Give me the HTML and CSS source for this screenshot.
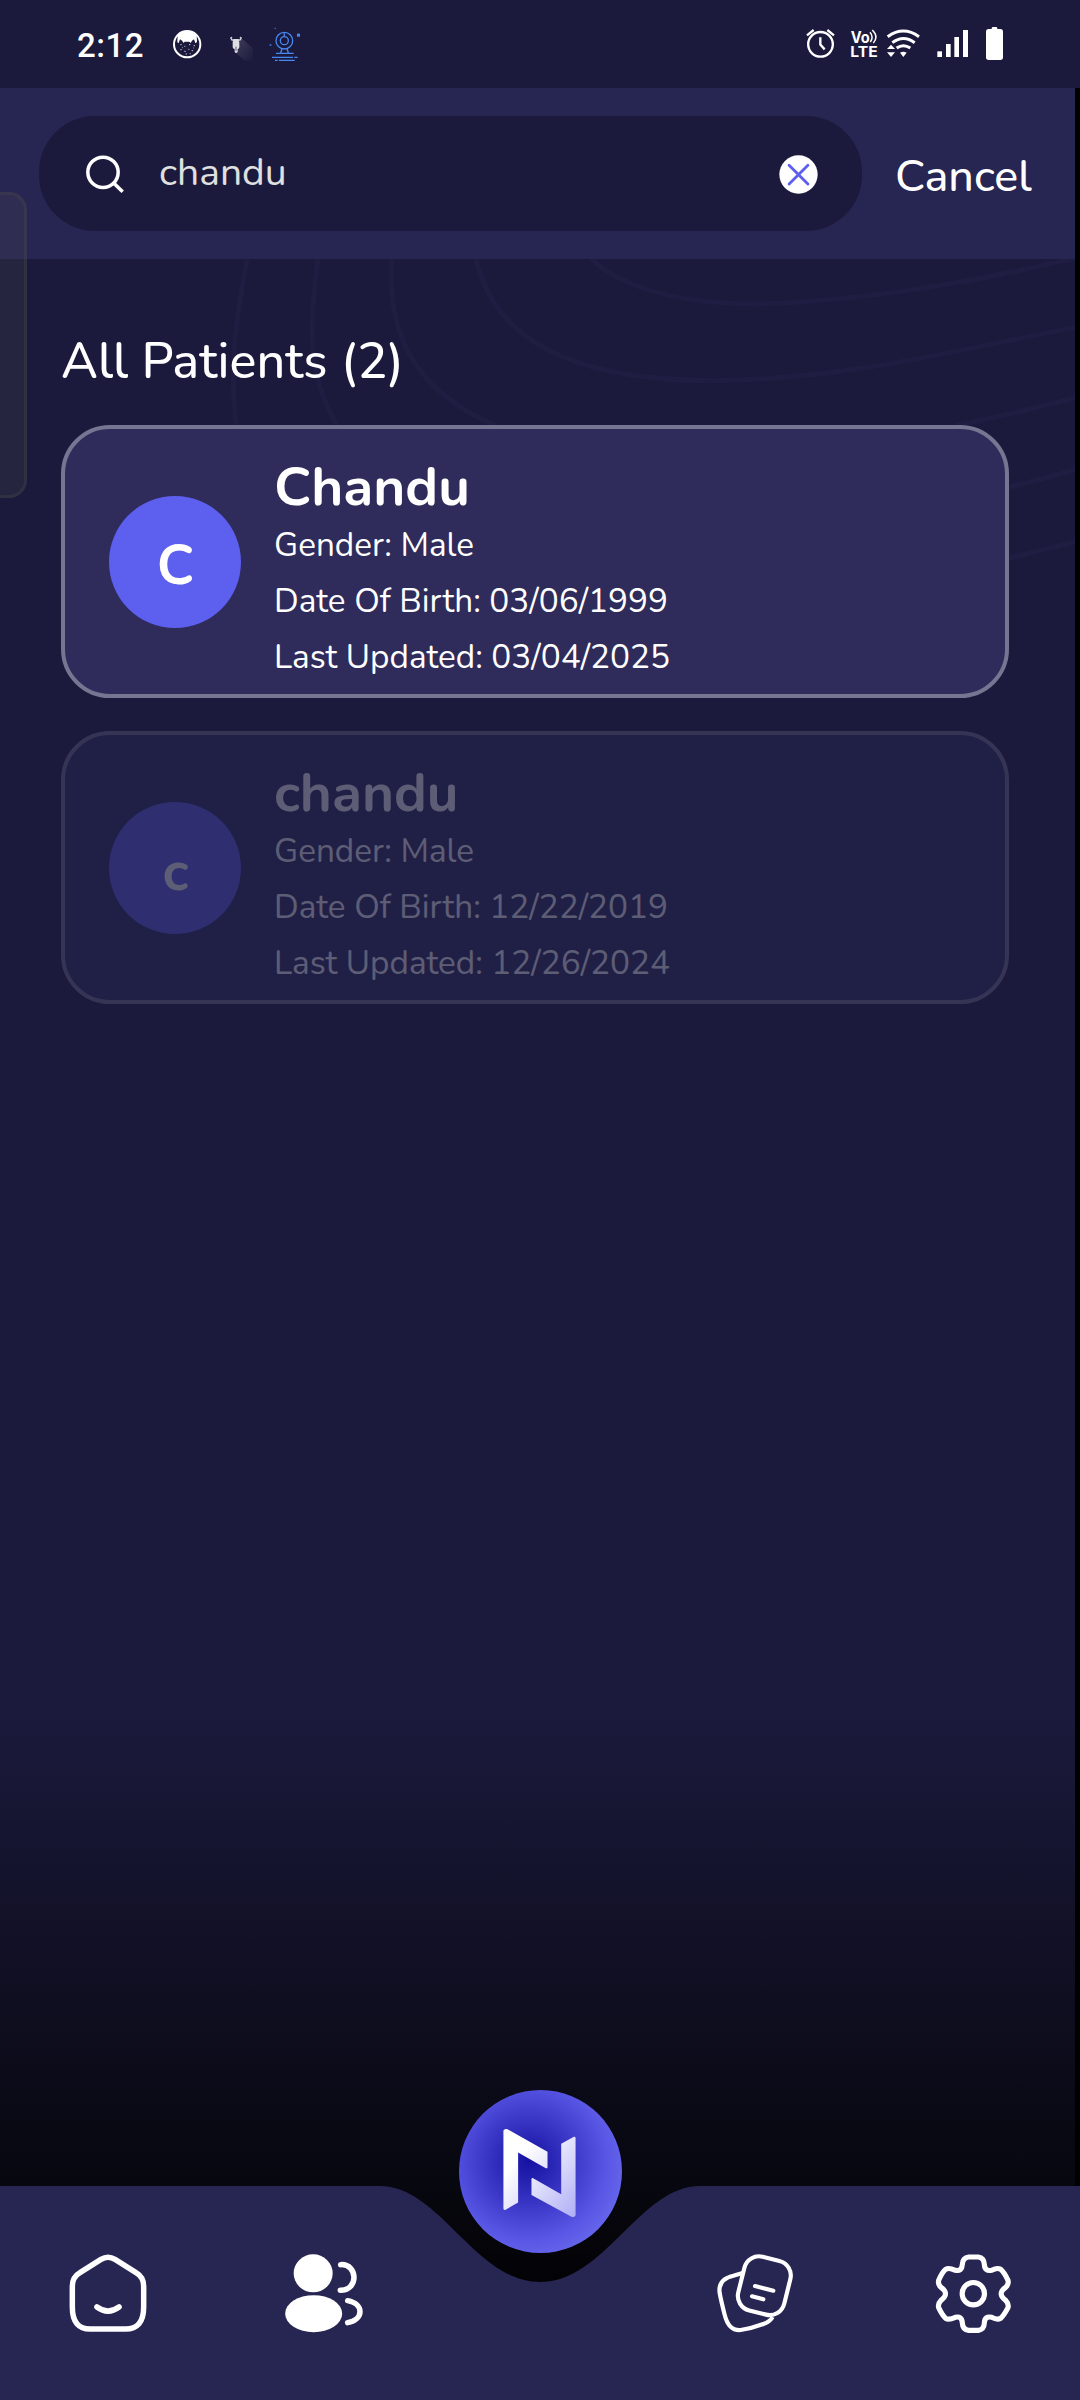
FILE: index.html
```html
<!DOCTYPE html>
<html lang="en">
<head>
<meta charset="utf-8">
<title>Patients</title>
<link rel="stylesheet" href="styles.css">
</head>
<body>
<div class="screen">
  <header class="status">
    <div class="status-left">
      <span class="time">2:12</span>
      <svg class="ic-cat" viewBox="24 21 87 102">
        <circle cx="66.500" cy="72.500" r="39.500" fill="none" stroke="#fff" stroke-width="6"/>
        <path d="M38 46Q66 22 95 46L96 64Q95 70 91 69L87 58Q80 61 77 69L73 65H59L56 69Q52 61 45 58L41 69Q37 70 37 64Z" fill="#fff"/>
        <path d="M46 74h4M58 79h3M72 74h4M86 77h4M46 89h4M58 94h4M70 88h3M80 92h4M62 102h4M74 101h3M52 83h2M84 84h2" stroke="#c8c8d4" stroke-width="3"/>
      </svg>
      <svg class="ic-scooter" viewBox="195 21 69 102">
        <defs><linearGradient id="shade" x1="0" y1="0" x2="1" y2="1"><stop offset="0" stop-color="#55536a"/><stop offset="1" stop-color="#1f1c3f"/></linearGradient></defs>
        <path d="M229 54L263 84V122H240L212 98Z" fill="url(#shade)" opacity=".6"/>
        <path d="M197 54L201 60H225L229 54" fill="none" stroke="#d6d6de" stroke-width="4"/>
        <circle cx="199" cy="53" r="3" fill="#ccc"/><circle cx="227" cy="53" r="3" fill="#ccc"/>
        <path d="M206 57H220L223 66V82Q222 87 218 88V96Q213 102 209 96V88Q204 87 203 82V66Z" fill="#dddde4"/>
        <path d="M213 80V92" stroke="#77758c" stroke-width="4"/>
      </svg>
      <svg class="ic-cam" viewBox="312 21 99 102" fill="none" stroke="#4788f0" stroke-width="4">
        <circle cx="358" cy="62" r="25"/><circle cx="358" cy="62" r="12"/>
        <path d="M358 40V48M351 86L347 98M366 86L370 98M333 100H386M321 112H384M388 112H398M330 121H338M342 121H389"/>
        <rect x="398" y="43" width="5" height="5" fill="#4788f0"/>
        <path d="M314 75H319M329 25H332"/>
      </svg>
    </div>
    <div class="status-right">
      <svg class="ic-alarm" viewBox="18 21 87 102" fill="none" stroke="#fff" stroke-width="7">
        <circle cx="61.500" cy="73" r="37"/><path d="M61 52V74L74 88M21 46L41 30M102 46L82 30"/>
      </svg>
      <svg class="ic-volte" viewBox="150 21 84 102">
        <text class="lte" x="152" y="68" textLength="57" lengthAdjust="spacingAndGlyphs">Vo</text>
        <text class="lte lower" x="151" y="112" textLength="82" lengthAdjust="spacingAndGlyphs">LTE</text>
        <path d="M210 37Q222 51 211 66M217 30Q237 50 220 69" fill="none" stroke="#fff" stroke-width="4.500"/>
      </svg>
      <svg class="ic-wifi" viewBox="258 21 105 102" fill="none" stroke="#fff" stroke-width="9">
        <path d="M263 50Q310 16 357 50M277 68Q310 43 344 68M290 84Q310 70 331 84"/>
        <path d="M300 98Q310 92 320 98L310 111ZM261 87L273 74L285 87ZM261 97H285L273 111Z" fill="#fff" stroke="none"/>
      </svg>
      <svg class="ic-signal" viewBox="408 21 99 102" fill="#fff">
        <rect x="412" y="94" width="14" height="17"/><rect x="438" y="72" width="14" height="39"/><rect x="463" y="51" width="14" height="60"/><rect x="489" y="30" width="15" height="81"/>
      </svg>
      <svg class="ic-battery" viewBox="555 21 57 102" fill="#fff">
        <rect x="558" y="27" width="51" height="93" rx="8"/><rect x="575" y="21" width="17" height="10" rx="4"/>
      </svg>
    </div>
  </header>

  <div class="content">
    <svg class="contours" viewBox="0 259 1075 360" fill="none">
      <path d="M247 259C240 300 227 360 237 430M318 259C308 330 308 380 340 430M391.500 259C389 320 400 385 500 428M476 259C495 340 570 380 712 380.700C850 380 980 345 1075 327.500M591 259C625 290 680 303 752 304C860 302 980 281 1075 258M955 426Q1020 412 1075 398M1000 489Q1040 480 1075 470M1000 560Q1040 551 1075 542"/>
    </svg>
    <div class="search-bar">
      <div class="search-field">
        <svg class="ic-search" viewBox="255 459 120 120" fill="none" stroke="#fff" stroke-width="10.500"><circle cx="309" cy="514" r="45.500"/><path d="M341 546L368 572"/></svg>
        <span class="query">chandu</span>
        <svg class="ic-clear" viewBox="118 464 117 118"><circle cx="176.500" cy="523" r="58" fill="#fff"/><path d="M148 495L205 552M205 495L148 552" fill="none" stroke="#5d5fef" stroke-width="8.500" stroke-linecap="round"/></svg>
      </div>
      <span class="cancel">Cancel</span>
    </div>
    <main class="patients">
      <h1 class="heading">All Patients (2)</h1>
      <article class="card">
        <div class="avatar">C</div>
        <div class="info">
          <h2 class="name">Chandu</h2>
          <p class="line">Gender: Male</p>
          <p class="line">Date Of Birth: 03/06/1999</p>
          <p class="line">Last Updated: 03/04/2025</p>
        </div>
      </article>
      <article class="card inactive">
        <div class="avatar">c</div>
        <div class="info">
          <h2 class="name">chandu</h2>
          <p class="line">Gender: Male</p>
          <p class="line">Date Of Birth: 12/22/2019</p>
          <p class="line">Last Updated: 12/26/2024</p>
        </div>
      </article>
    </main>
  </div>

  <nav class="nav">
    <svg class="nav-notch" viewBox="0 0 320 96"><defs><linearGradient id="dip" x1="0" y1="0" x2="0" y2="1"><stop offset="0" stop-color="#07070f"/><stop offset="1" stop-color="#030306"/></linearGradient></defs><path d="M0 0C60 0 95 96 160 96C225 96 260 0 320 0Z" fill="url(#dip)"/></svg>
    <svg class="fab" viewBox="296 91 488 488">
      <defs>
        <radialGradient id="orb" gradientUnits="userSpaceOnUse" cx="504" cy="305" r="335"><stop offset="0" stop-color="#1712a3"/><stop offset=".12" stop-color="#201cac"/><stop offset=".7" stop-color="#5856e4"/><stop offset="1" stop-color="#7070f2"/></radialGradient>
        <linearGradient id="fold" gradientUnits="userSpaceOnUse" x1="450" y1="260" x2="660" y2="440"><stop offset="0" stop-color="#fff"/><stop offset=".15" stop-color="#fff"/><stop offset="1" stop-color="#b2b1f6"/></linearGradient>
      </defs>
      <circle cx="540" cy="335" r="244" fill="url(#orb)"/>
      <path d="M429 212Q432 206 440 208L561 276V322Q561 327 556 325L473 278V428L434 450Q429 451 429 446ZM513 358Q513 353 518 355L602 403V252L640 231Q645 230 645 235V466Q643 473 634 471L513 405Z" fill="url(#fold)"/>
    </svg>
    <div class="tab"><svg class="tab-icon" viewBox="207 281 234 234" fill="none" stroke="#fff" stroke-width="16.500" stroke-linecap="round">
      <path d="M303 297Q324 284 345 297L408 337Q431 350 431 378V440Q431 507 375 506H272Q217 507 217 440V378Q217 350 240 337Z"/><path d="M291 440Q324 465 357 440" stroke-width="17"/></svg></div>
    <div class="tab"><svg class="tab-icon" viewBox="855 281 234 234" fill="none" stroke="#fff" stroke-width="16.500" stroke-linecap="round">
      <ellipse cx="939.500" cy="339" rx="58.500" ry="57" fill="#fff" stroke="none"/><ellipse cx="941" cy="460" rx="85.500" ry="55.500" fill="#fff" stroke="none"/>
      <path d="M1022 313C1048 311 1062 332 1062 351C1062 371 1048 390 1021 390M1043 421C1068 426 1080 440 1080 454C1080 468 1068 482 1043 487"/></svg></div>
    <div class="tab"></div>
    <div class="tab"><svg class="tab-icon" viewBox="111 281 234 234" fill="none" stroke="#fff" stroke-width="12.500" stroke-linecap="round">
      <rect x="182" y="293" width="142" height="166" rx="45" transform="rotate(14 253 376)"/>
      <path d="M188 338L160 346Q113 357 119 398Q124 425 134 463Q146 512 182 509Q215 504 250 491Q270 484 278 470" stroke-linecap="butt"/><path d="M225 377L280 391M216 408L250 417"/></svg></div>
    <div class="tab"><svg class="tab-icon" viewBox="759 281 234 234" fill="none" stroke="#fff" stroke-width="15.500">
      <circle cx="880" cy="400" r="33.500"/>
      <path d="M866 290H895Q912 292 913 312Q914 334 935 330Q952 321 962 327Q972 335 984 360Q987 372 977 381Q950 400 977 420Q987 430 984 442Q972 465 962 474Q952 480 935 471Q914 466 913 488Q912 508 895 510H866Q848 508 847 488Q846 466 826 471Q806 480 797 474Q787 465 776 442Q773 430 783 420Q810 400 783 381Q773 372 776 360Q787 335 797 327Q806 321 826 330Q846 334 847 312Q848 292 866 290Z"/></svg></div>
  </nav>
  <div class="edge-handle"></div>
</div>
</body>
</html>
```
FILE: styles.css
```css
* {
  box-sizing: border-box;
}

body {
  margin: 0;
  background: #000;
  color: #fff;
  font-family: Nunito, "Open Sans", sans-serif;
}

h1, h2, p {
  margin: 0;
}

svg {
  display: block;
  flex: none;
}

.screen {
  position: relative;
  display: flex;
  flex-direction: column;
  width: 1080px;
  height: 2400px;
  overflow: hidden;
}

/* Status bar */
.status {
  display: flex;
  justify-content: space-between;
  height: 88px;
  padding: 0 76px 0 77px;
  background: #1b1a3d;
}

.status-left,
.status-right {
  display: flex;
  align-items: center;
}

.status svg {
  height: 34px;
}

.time {
  width: 96px;
  padding-top: 3px;
  font: 500 33px/40px Roboto, sans-serif;
  letter-spacing: 0.5px;
}

.ic-cat { width: 29px; margin-right: 28px; }
.ic-scooter { width: 23px; margin-right: 16px; }
.ic-cam { width: 33px; }
.ic-alarm { width: 29px; margin-right: 15px; }
.ic-volte { width: 28px; margin-right: 8px; }
.ic-wifi { width: 35px; margin-right: 15px; }
.ic-signal { width: 33px; margin-right: 16px; }
.ic-battery { width: 19px; }

.lte {
  font: 700 46px Inter, sans-serif;
  fill: #fff;
}

.lte.lower {
  font-size: 42px;
}

.content {
  position: relative;
  flex: 1;
  width: 1075px;
  background: linear-gradient(#1b1a3d 0, #1b1a3d 1615px, #07070f 2098px);
}

.contours {
  position: absolute;
  left: 0;
  top: 171px;
  width: 1075px;
  height: 360px;
  stroke: #201d43;
  stroke-width: 5;
}

.search-bar {
  position: relative;
  display: flex;
  align-items: center;
  gap: 33px;
  height: 171px;
  padding-left: 39px;
  background: #272552;
}

.search-field {
  display: flex;
  align-items: center;
  width: 823px;
  height: 115px;
  padding: 0 44px 0 46px;
  border-radius: 56px;
  background: #1b1a3d;
}

.ic-search {
  width: 40px;
  height: 40px;
}

.query {
  flex: 1;
  padding: 0 0 3px 34px;
  color: #e0e0e0;
  font-size: 39px;
}

.ic-clear {
  width: 39px;
  height: 39px;
  margin-top: 2px;
}

.cancel {
  padding-top: 6px;
  font-size: 44.8px;
  font-weight: 500;
}

.patients {
  position: relative;
  padding: 69px 66px 0 61px;
}

.heading {
  margin-bottom: 29px;
  font-size: 50.4px;
  font-weight: 500;
  line-height: 68px;
}

.card {
  display: flex;
  align-items: center;
  gap: 33px;
  height: 273px;
  margin-bottom: 33px;
  padding: 19px 44px 0;
  border: 4px solid #767592;
  border-radius: 49px;
  background: #2f2c5b;
}

.avatar {
  display: flex;
  align-items: center;
  justify-content: center;
  width: 132px;
  height: 132px;
  margin-top: -19px;
  padding: 8px 0 0 1px;
  border-radius: 50%;
  background: #5d5fef;
  font-size: 55px;
  font-weight: 700;
}

.name {
  font-size: 54.8px;
  font-weight: 700;
  line-height: 60px;
}

.line {
  font-size: 33.3px;
  line-height: 56px;
}

.card.inactive {
  opacity: 0.29;
}

/* Bottom navigation */
.nav {
  position: relative;
  display: grid;
  grid-template-columns: repeat(5, 1fr);
  height: 214px;
  padding-top: 68px;
  background: #272552;
}

.tab {
  display: flex;
  justify-content: center;
}

.tab-icon {
  width: 78px;
  height: 78px;
  overflow: visible;
}

.nav-notch {
  position: absolute;
  left: 380px;
  top: 0;
  width: 320px;
  height: 96px;
}

.fab {
  position: absolute;
  left: 458.5px;
  top: -96px;
  width: 163px;
  height: 163px;
}

/* System edge panel handle */
.edge-handle {
  position: absolute;
  left: -4px;
  top: 192px;
  width: 31px;
  height: 306px;
  border: 3px solid rgba(76, 76, 76, 0.3);
  border-radius: 0 18px 18px 0;
  background: rgba(76, 76, 76, 0.22);
}
```
